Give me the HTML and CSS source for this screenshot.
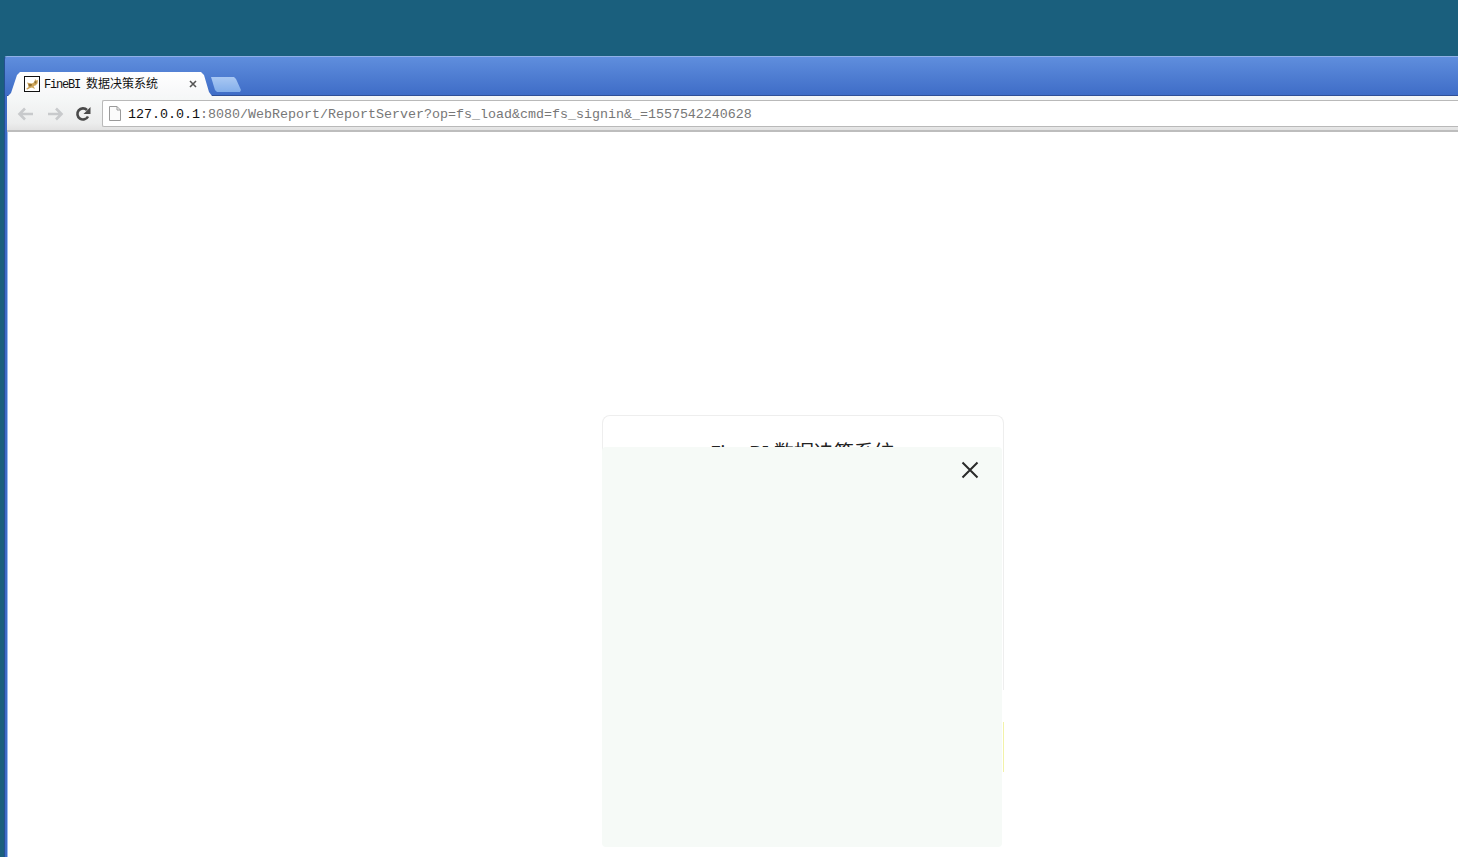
FILE: index.html
```html
<!DOCTYPE html>
<html lang="en">
<head>
    <meta charset="UTF-8">
    <meta name="viewport" content="width=device-width, initial-scale=1.0">
    <title>FineBI 数据决策系统</title>
    <link rel="stylesheet" href="styles.css">
</head>
<body>
    <div class="browser">
        <div class="tab-strip">
            <div class="tab">
                <svg class="favicon" width="16" height="16" viewBox="0 0 16 16">
                    <rect x="0.5" y="0.5" width="15" height="15" fill="#fff" stroke="#111"/>
                    <path d="M2 13 L4.5 11 L4 8.5 L3 6.5 L5 7 L8 7.5 L10.5 6 L11 3 L12.5 4.5 L14 4 L13.5 7.5 L11.5 9.5 L9.5 10 L11 13 L8 11.5 L6 12 L3.5 13.5 Z" fill="#cda55a"/>
                    <path d="M4.5 8 L8 8 L7.5 10 L5 10.5 Z M10.5 5 L12.5 5.5 L12 7.5 L10.5 7 Z" fill="#8f6f30"/>
                </svg>
                <span class="tab-title"><span class="tab-latin">FineBI </span>数据决策系统</span>
                <svg class="tab-close" width="8" height="8" viewBox="0 0 8 8">
                    <path d="M1 1 L7 7 M7 1 L1 7" stroke="#555" stroke-width="1.6"/>
                </svg>
            </div>
            <div class="new-tab"></div>
        </div>
        <div class="toolbar">
            <svg class="nav-icon" width="18" height="16" viewBox="0 0 18 16">
                <path d="M8 2.5 L2.5 8 L8 13.5 M3 8 L16 8" fill="none" stroke="#c8cacc" stroke-width="2.6"/>
            </svg>
            <svg class="nav-icon" width="18" height="16" viewBox="0 0 18 16">
                <path d="M10 2.5 L15.5 8 L10 13.5 M15 8 L2 8" fill="none" stroke="#c8cacc" stroke-width="2.6"/>
            </svg>
            <svg class="nav-icon" width="16" height="16" viewBox="0 0 16 16">
                <path d="M13 10.5 A5.6 5.6 0 1 1 12 4" fill="none" stroke="#4a4a4a" stroke-width="2.6"/>
                <path d="M15.5 1 L15.5 8 L8.5 8 Z" fill="#4a4a4a"/>
            </svg>
            <div class="omnibox">
                <svg class="page-icon" width="12" height="15" viewBox="0 0 12 15">
                    <path d="M0.5 0.5 H8 L11.5 4 V14.5 H0.5 Z M8 0.5 V4 H11.5" fill="#fbfbfb" stroke="#9a9a9a"/>
                </svg>
                <span class="url"><span class="url-host">127.0.0.1</span>:8080/WebReport/ReportServer?op=fs_load&amp;cmd=fs_signin&amp;_=1557542240628</span>
            </div>
        </div>
        <div class="page">
            <div class="login-card">
                <div class="login-title">FineBI 数据决策系统</div>
                <div class="login-field"></div>
                <div class="overlay">
                    <svg class="overlay-close" width="18" height="18" viewBox="0 0 18 18">
                        <path d="M1.5 1.5 L16.5 16.5 M16.5 1.5 L1.5 16.5" stroke="#2a2a2a" stroke-width="2"/>
                    </svg>
                </div>
            </div>
        </div>
    </div>
</body>
</html>
```

FILE: styles.css
```css
html, body {
    margin: 0;
    height: 100%;
    overflow: hidden;
}
body {
    background-color: #1a5f7d;
    padding: 56px 0 0 4px;
    box-sizing: border-box;
    font-family: "Liberation Mono", "Noto Sans CJK SC", monospace;
}
.browser {
    height: 801px;
    display: flex;
    flex-direction: column;
    background: linear-gradient(#5f8edd, #3d6bc6 40px);
    border-top: 1px solid #8fb0e6;
    border-left: 1px solid #24508f;
    border-top-left-radius: 3px;
    box-sizing: border-box;
    padding-left: 2px;
}
.tab-strip {
    height: 39px;
    box-sizing: border-box;
    border-bottom: 1px solid #2f4f96;
    display: flex;
    align-items: flex-end;
    padding-left: 1px;
}
.tab {
    width: 204px;
    height: 24px;
    background: linear-gradient(#ffffff, #f6f7f8);
    clip-path: polygon(0 100%, 3px 21px, 9px 3px, 12px 0, 193px 0, 196px 3px, 201px 20px, 204px 100%);
    display: flex;
    align-items: center;
    padding: 0 15px 0 16px;
    box-sizing: border-box;
    margin-bottom: -1px;
}
.favicon {
    flex: none;
    margin-right: 4px;
}
.tab-title {
    font-size: 12px;
    color: #111;
    flex: 1;
    white-space: pre;
    position: relative;
    top: -1px;
}
.tab-latin {
    letter-spacing: -1.2px;
}
.tab-close {
    flex: none;
}
.new-tab {
    width: 30px;
    height: 15px;
    margin: 0 0 3px -1px;
    background: linear-gradient(#a9c8f3, #83aeea);
    clip-path: polygon(0 0, 23px 0, 25px 2px, 30px 13px, 29px 15px, 6px 15px, 4px 13px);
}
.toolbar {
    height: 36px;
    box-sizing: border-box;
    background: linear-gradient(#f6f8f8, #eceded 80%, #e2e2e2);
    border-bottom: 2px solid #bdbdbd;
    display: flex;
    align-items: center;
    padding: 1px 0 0 10px;
    gap: 11px;
}
.nav-icon {
    flex: none;
}
.omnibox {
    flex: 1;
    height: 27px;
    background-color: #fff;
    border: 1px solid #b9b9b9;
    border-right: none;
    border-radius: 2px 0 0 2px;
    box-sizing: border-box;
    display: flex;
    align-items: center;
    padding-left: 6px;
    gap: 6px;
}
.page-icon {
    flex: none;
}
.url {
    font-size: 13.33px;
    color: #777;
    white-space: nowrap;
    padding: 2px 0 0 1px;
}
.url-host {
    color: #111;
}
.page {
    flex: 1;
    min-height: 0;
    background-color: #fff;
    border-left: 1px solid #9dbcee;
    padding: 283px 0 0 594px;
    overflow: hidden;
}
.login-card {
    position: relative;
    width: 402px;
    height: 275px;
    box-sizing: border-box;
    border: 1px solid #eeeeee;
    border-bottom: none;
    border-radius: 8px 8px 0 0;
    padding-top: 25px;
}
.login-title {
    font-family: "Noto Sans", "Noto Sans CJK SC", sans-serif;
    font-size: 20px;
    line-height: 24px;
    text-align: center;
    color: #222;
    padding-right: 2px;
}
.login-field {
    position: absolute;
    right: -1px;
    top: 306px;
    width: 1px;
    height: 50px;
    background-color: #f2f2a8;
}
.overlay {
    position: absolute;
    left: -1px;
    top: 31px;
    width: 400px;
    height: 400px;
    background-color: #f6faf7;
    border-radius: 4px;
}
.overlay-close {
    position: absolute;
    top: 14px;
    right: 23px;
}
```
